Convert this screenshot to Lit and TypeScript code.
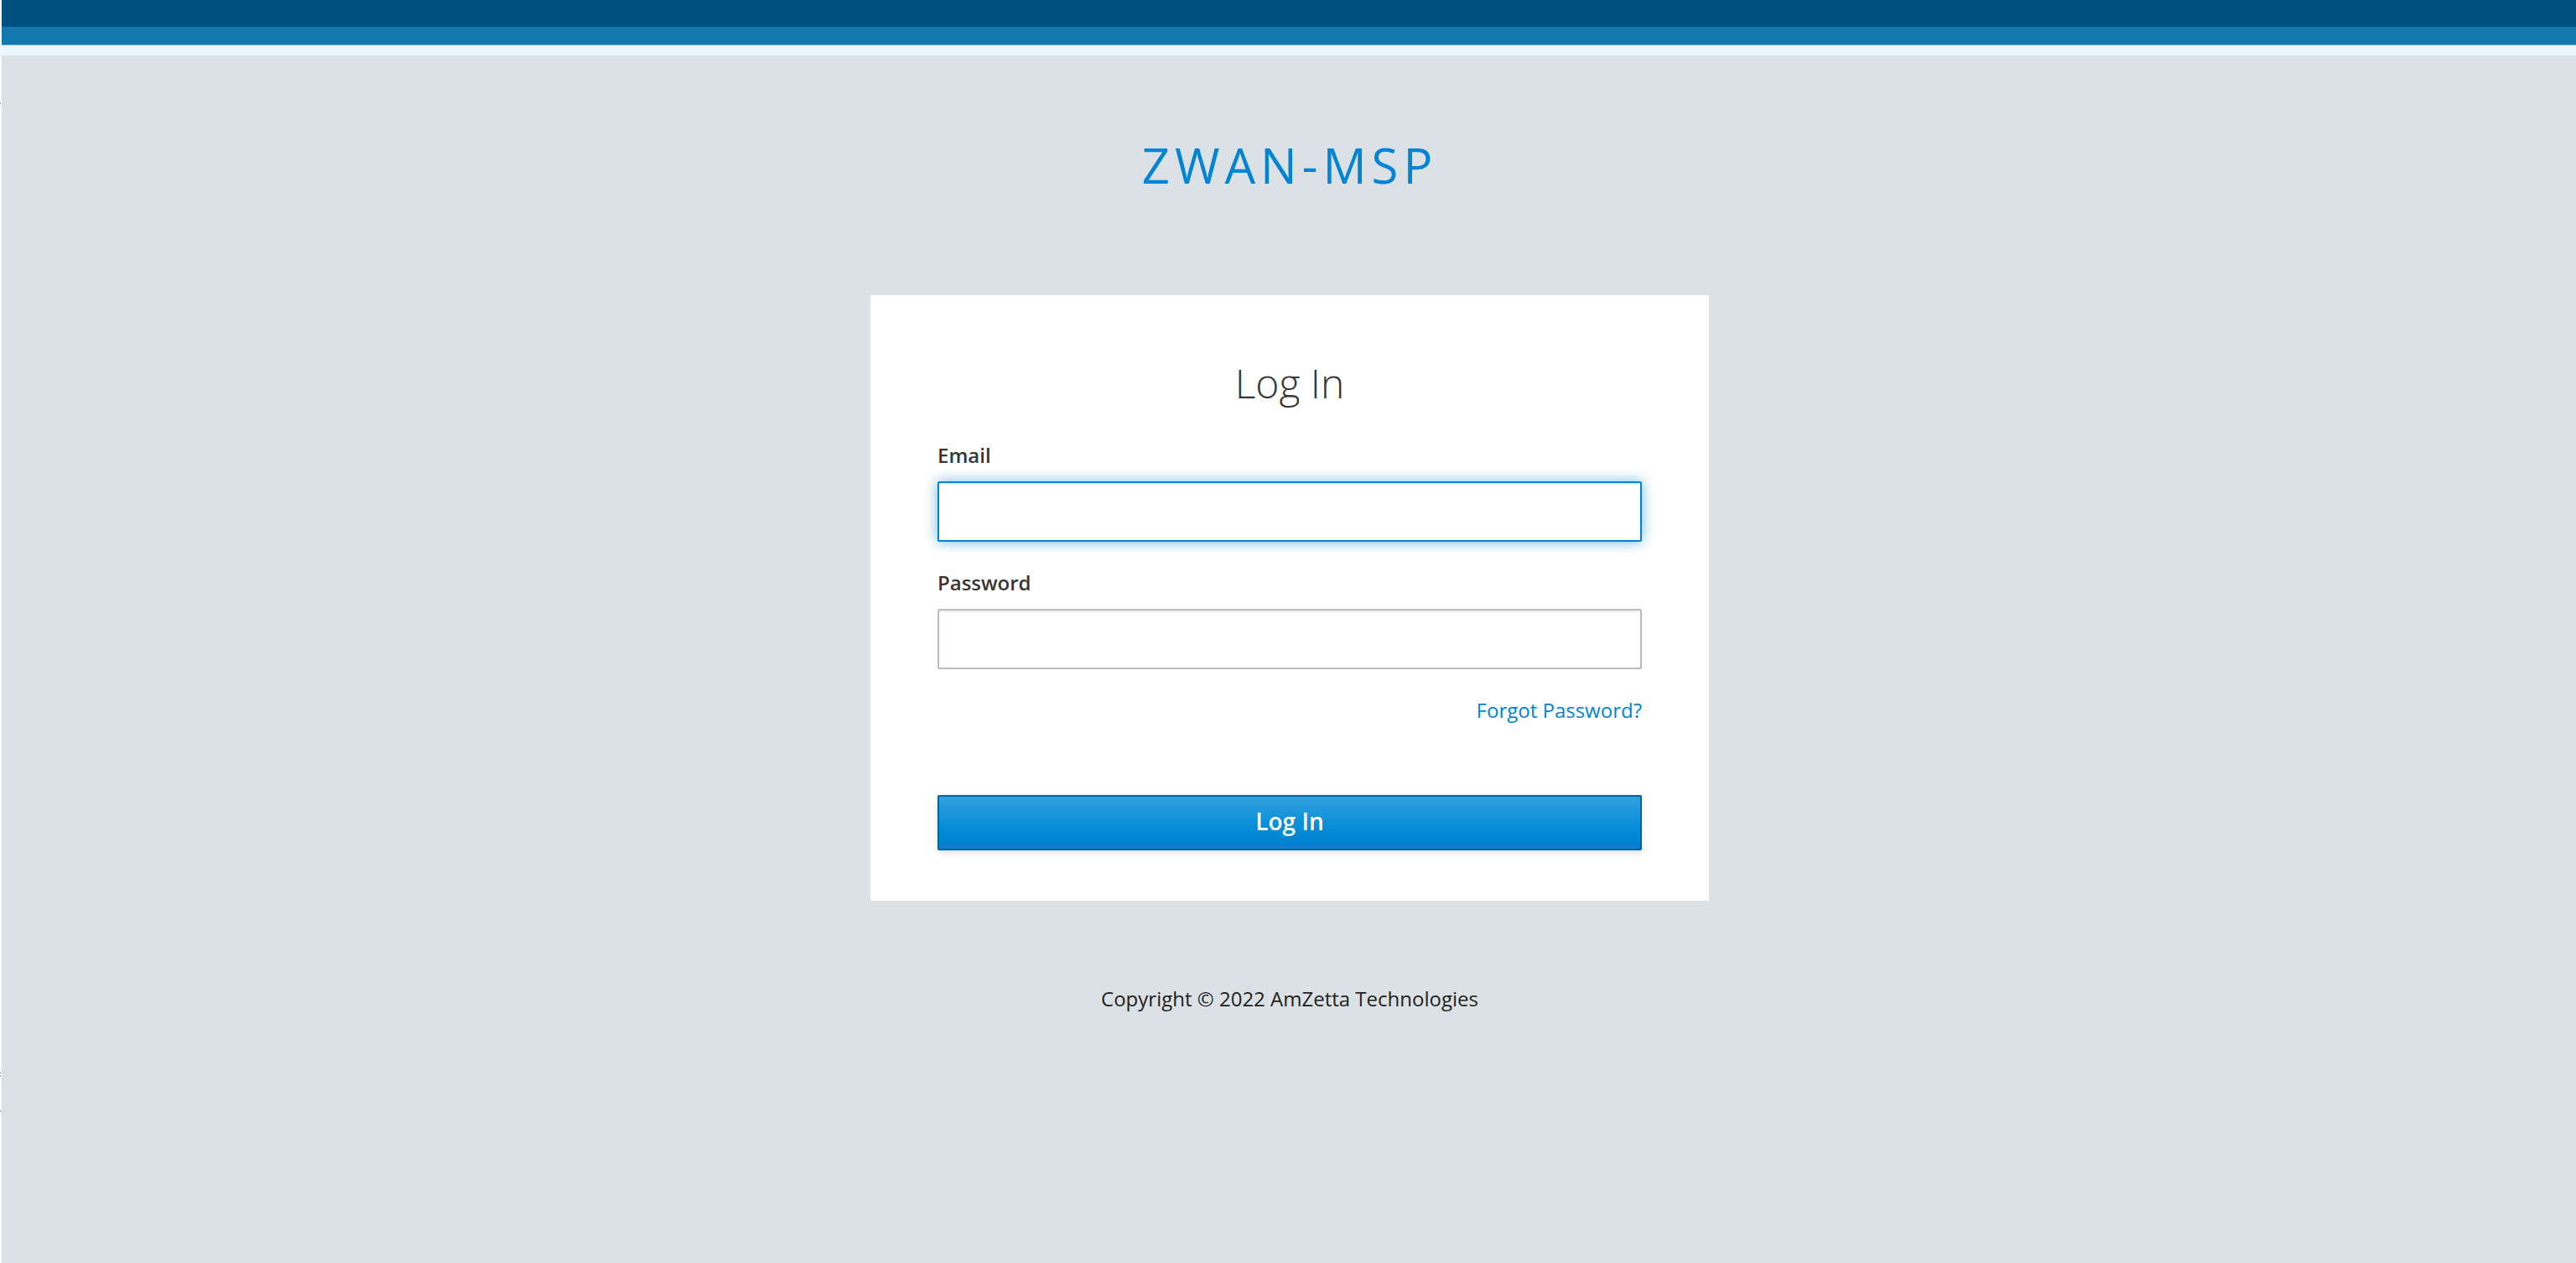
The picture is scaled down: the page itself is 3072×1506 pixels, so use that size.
import { LitElement, html, css } from "lit";
import { customElement } from "lit/decorators.js";

@customElement("login-card")
class LoginCard extends LitElement {
  static styles = css`
    :host {
      display: block;
      box-sizing: border-box;
      width: 100%;
      max-width: 1000px;
      padding: 73px 80px 60px;
      background: #fff;
    }
    .heading {
      margin: 0 0 34px;
      font-size: 48px;
      line-height: 64px;
      font-weight: 300;
      text-align: center;
      color: #363636;
    }
    .form {
      display: flex;
      flex-direction: column;
      gap: 29px;
    }
    .field {
      display: flex;
      flex-direction: column;
      gap: 11px;
    }
    .label {
      font-size: 24px;
      line-height: 40px;
      font-weight: 600;
      color: #363636;
    }
    .input {
      box-sizing: border-box;
      width: 100%;
      height: 72px;
      padding: 4px 20px;
      border: 2px solid #bbb;
      border-radius: 2px;
      outline: none;
      background: #fff;
      box-shadow: inset 0 2px 2px rgba(3, 3, 3, 0.075);
      font: inherit;
      font-size: 28px;
      color: #363636;
    }
    .input.active,
    .input:focus {
      border-color: #0082d1;
      box-shadow: inset 0 2px 2px rgba(3, 3, 3, 0.075),
        0 0 16px rgba(0, 136, 206, 0.6);
    }
    .link {
      align-self: flex-end;
      font-size: 24px;
      line-height: 40px;
      color: #0084d4;
      text-decoration: none;
    }
    .submit {
      box-sizing: border-box;
      height: 66px;
      margin-top: 52px;
      padding: 0 0 4px;
      border: 2px solid #0063a2;
      border-radius: 2px;
      background: linear-gradient(#33a1df, #008ad7 66%, #0080cf);
      box-shadow: 0 4px 6px rgba(3, 3, 3, 0.1);
      font: inherit;
      font-size: 28px;
      line-height: 40px;
      font-weight: 600;
      color: #fff;
      cursor: pointer;
    }
  `;

  render() {
    return html`
      <h2 class="heading">Log In</h2>
      <form class="form" @submit=${(e: Event) => e.preventDefault()}>
        <div class="field">
          <label class="label" for="email">Email</label>
          <input class="input active" id="email" type="text" autocomplete="off" />
        </div>
        <div class="field">
          <label class="label" for="password">Password</label>
          <input class="input" id="password" type="password" autocomplete="off" />
        </div>
        <a class="link" href="#">Forgot Password?</a>
        <button class="submit" type="submit">Log In</button>
      </form>
    `;
  }
}

@customElement("app-root")
class AppRoot extends LitElement {
  static styles = css`
    :host {
      display: flex;
      min-height: 100vh;
      background: #dce1e5;
      font-family: "Open Sans", "Noto Sans", sans-serif;
    }
    /* Sliver of the neighbouring panel, with its faint tick marks. */
    .edge {
      flex: none;
      width: 2px;
      background:
        linear-gradient(#aaa, #aaa) 0 122px / 1px 2px no-repeat,
        linear-gradient(#aaa, #aaa) 0 1278px / 1px 2px no-repeat,
        linear-gradient(#aaa, #aaa) 0 1282px / 1px 2px no-repeat,
        linear-gradient(#bbb, #bbb) 0 1324px / 2px 2px no-repeat,
        #f7f8f9;
    }
    .page {
      flex: 1;
      min-width: 0;
      display: flex;
      flex-direction: column;
    }
    .bands {
      height: 66px;
      background: linear-gradient(
        #004f7e 32px,
        #1179ad 32px 53px,
        #5aa8d0 53px 54px,
        #e8f7fc 54px
      );
    }
    .main {
      display: flex;
      flex-direction: column;
      align-items: center;
      padding: 91px 0 48px 2px;
    }
    .brand {
      margin: 0 0 115px;
      font-size: 58px;
      line-height: 80px;
      font-weight: 400;
      letter-spacing: 6px;
      text-transform: uppercase;
      color: #0084d4;
    }
    .copyright {
      margin: 97px 0 0;
      font-size: 24px;
      line-height: 40px;
      color: #222;
    }
  `;

  render() {
    return html`
      <div class="edge"></div>
      <div class="page">
        <div class="bands"></div>
        <main class="main">
          <h1 class="brand">ZWAN-MSP</h1>
          <login-card></login-card>
          <p class="copyright">Copyright © 2022 AmZetta Technologies</p>
        </main>
      </div>
    `;
  }
}
